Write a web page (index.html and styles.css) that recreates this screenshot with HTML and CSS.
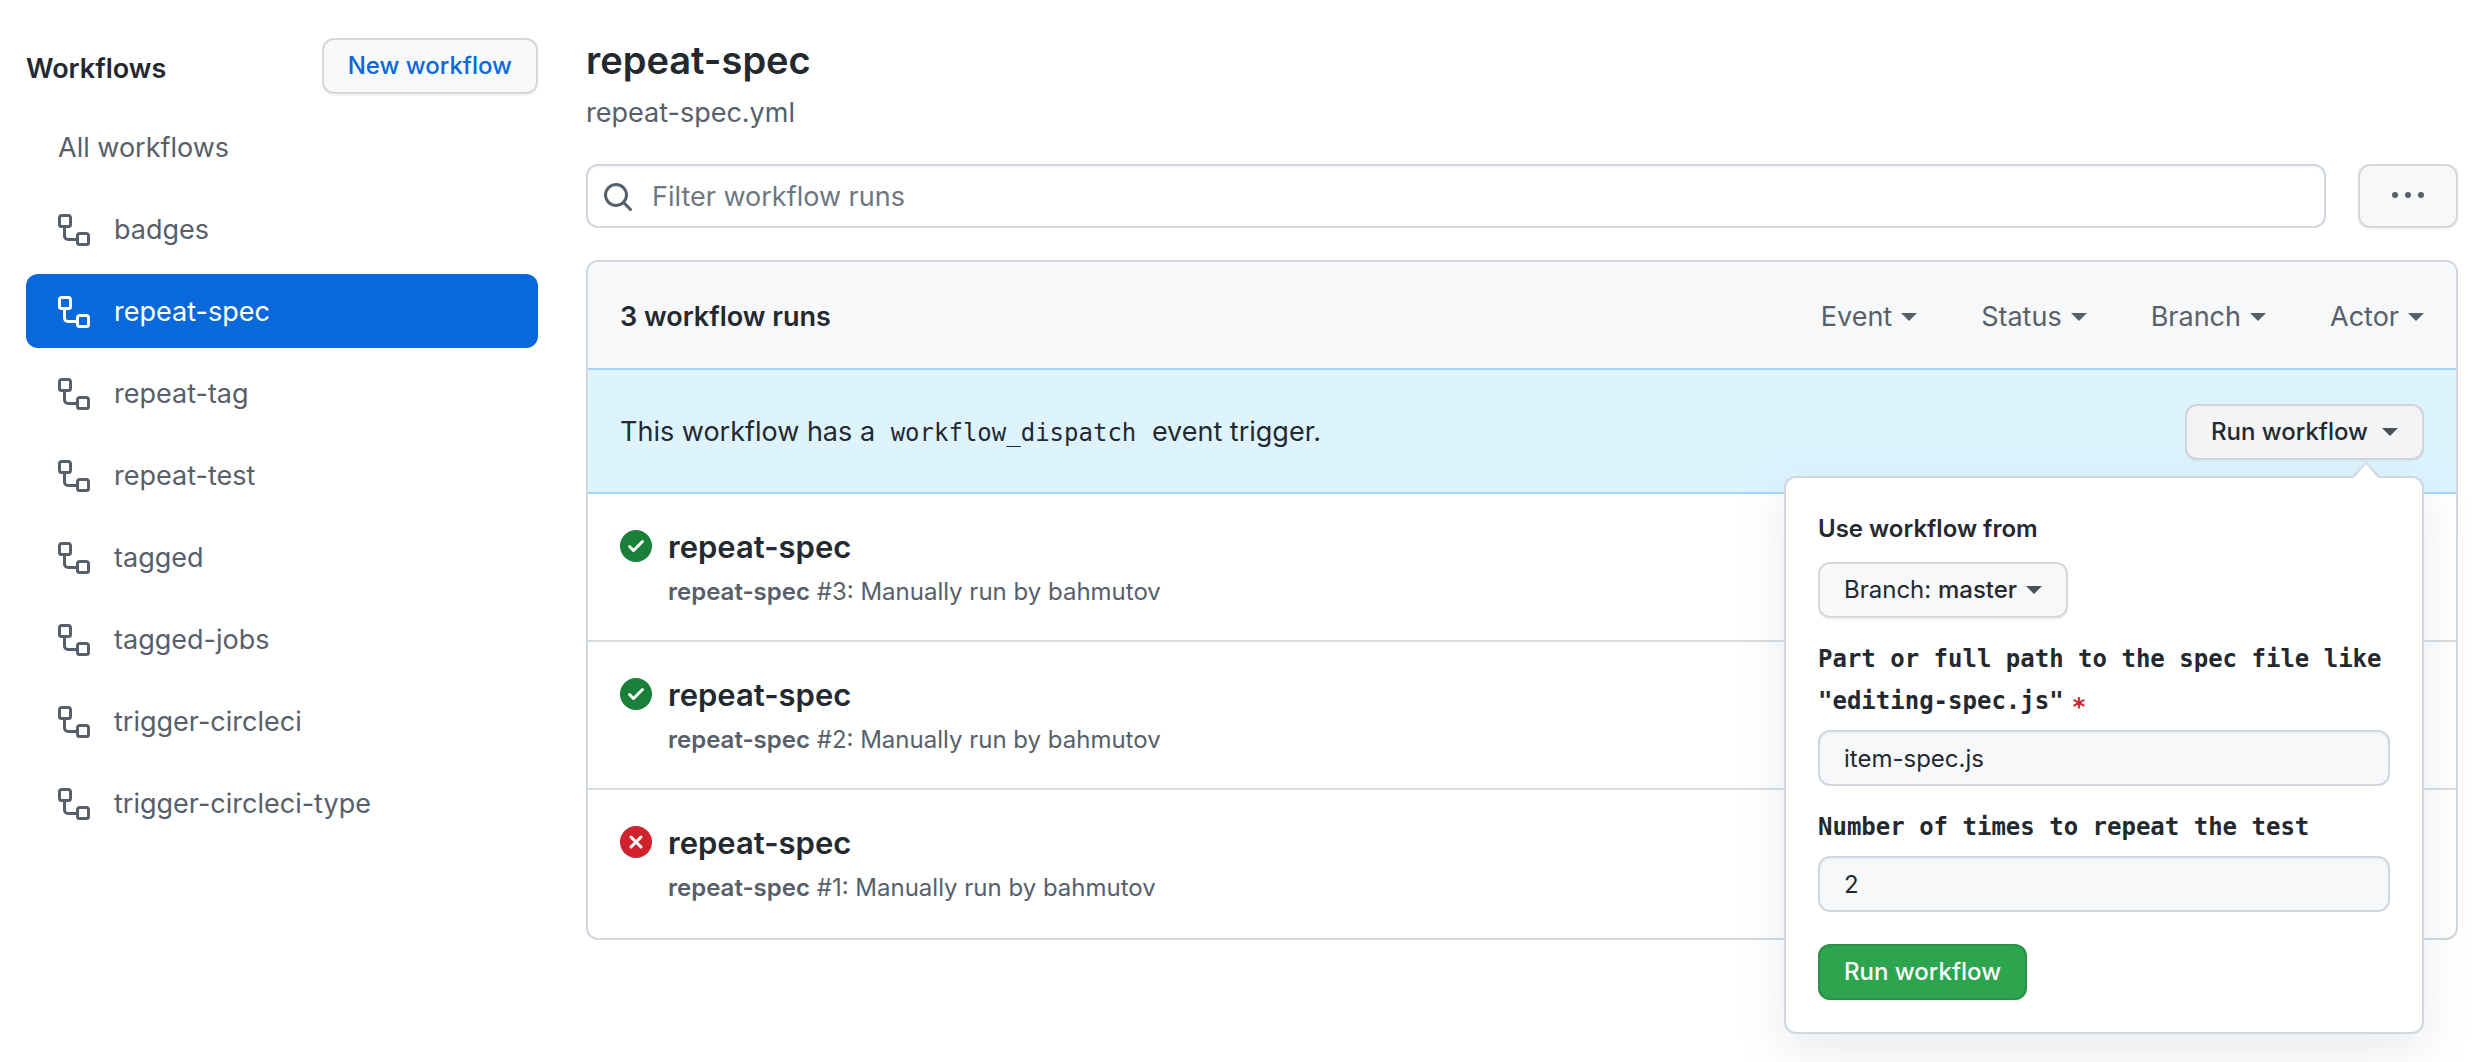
FILE: index.html
```html
<!DOCTYPE html>
<html lang="en">
<head>
<meta charset="utf-8">
<meta name="viewport" content="width=device-width, initial-scale=1">
<title>Workflow runs · repeat-spec</title>
<link rel="stylesheet" href="styles.css">
</head>
<body>
<svg class="sprite" aria-hidden="true">
  <symbol id="i-workflow" viewBox="0 0 16 16"><path fill-rule="evenodd" d="M0 1.75C0 .784.784 0 1.75 0h3.5C6.216 0 7 .784 7 1.75v3.5A1.75 1.75 0 0 1 5.25 7H4v4a1 1 0 0 0 1 1h4v-1.25C9 9.784 9.784 9 10.75 9h3.5c.966 0 1.75.784 1.75 1.75v3.5A1.75 1.75 0 0 1 14.250 16h-3.5A1.75 1.75 0 0 1 9 14.250v-.75H5A2.500 2.500 0 0 1 2.500 11V7h-.75A1.750 1.750 0 0 1 0 5.250Zm1.750-.25a.25.25 0 0 0-.25.25v3.500c0 .138.112.25.25.25h3.500a.25.25 0 0 0 .25-.25v-3.500a.25.25 0 0 0-.25-.25Zm9 9a.25.25 0 0 0-.25.25v3.500c0 .138.112.25.25.25h3.500a.25.25 0 0 0 .25-.25v-3.500a.25.25 0 0 0-.25-.25Z"/></symbol>
  <symbol id="i-search" viewBox="0 0 16 16"><path fill-rule="evenodd" d="M11.500 7a4.500 4.500 0 1 1-9 0 4.500 4.500 0 0 1 9 0Zm-.820 4.740a6 6 0 1 1 1.060-1.060l3.040 3.040a.75.75 0 1 1-1.060 1.060Z"/></symbol>
  <symbol id="i-dots" viewBox="0 0 16 16"><path d="M8 9a1.500 1.500 0 1 0 0-3 1.500 1.500 0 0 0 0 3ZM1.500 9a1.500 1.500 0 1 0 0-3 1.500 1.500 0 0 0 0 3Zm13 0a1.500 1.500 0 1 0 0-3 1.500 1.500 0 0 0 0 3Z"/></symbol>
  <symbol id="i-check" viewBox="0 0 16 16"><path fill-rule="evenodd" d="M8 16A8 8 0 1 0 8 0a8 8 0 0 0 0 16Zm3.780-9.720a.75.75 0 0 0-1.060-1.060L6.750 9.190 5.280 7.720a.75.75 0 0 0-1.060 1.060l2 2a.75.75 0 0 0 1.060 0Z"/></symbol>
  <symbol id="i-x" viewBox="0 0 16 16"><circle cx="8" cy="8" r="8"/><path fill="none" stroke="#fff" stroke-width="1.5" stroke-linecap="round" d="M5.500 5.500l5 5M10.500 5.500l-5 5"/></symbol>
</svg>

<div class="layout">
  <aside class="sidebar">
    <div class="sidebar-head">
      <h2 class="sidebar-title">Workflows</h2>
      <button class="btn btn-link" type="button">New workflow</button>
    </div>
    <nav class="nav" aria-label="Workflows">
      <a class="nav-item" href="#">All workflows</a>
      <a class="nav-item" href="#"><svg class="icon"><use href="#i-workflow"/></svg>badges</a>
      <a class="nav-item nav-item-selected" href="#" aria-current="page"><svg class="icon"><use href="#i-workflow"/></svg>repeat-spec</a>
      <a class="nav-item" href="#"><svg class="icon"><use href="#i-workflow"/></svg>repeat-tag</a>
      <a class="nav-item" href="#"><svg class="icon"><use href="#i-workflow"/></svg>repeat-test</a>
      <a class="nav-item" href="#"><svg class="icon"><use href="#i-workflow"/></svg>tagged</a>
      <a class="nav-item" href="#"><svg class="icon"><use href="#i-workflow"/></svg>tagged-jobs</a>
      <a class="nav-item" href="#"><svg class="icon"><use href="#i-workflow"/></svg>trigger-circleci</a>
      <a class="nav-item" href="#"><svg class="icon"><use href="#i-workflow"/></svg>trigger-circleci-type</a>
    </nav>
  </aside>

  <main class="main">
    <h1 class="page-title">repeat-spec</h1>
    <p class="page-file">repeat-spec.yml</p>

    <div class="toolbar">
      <label class="search">
        <svg class="icon" aria-hidden="true"><use href="#i-search"/></svg>
        <input class="search-input" type="text" placeholder="Filter workflow runs" aria-label="Filter workflow runs">
      </label>
      <button class="btn btn-more" type="button" aria-label="More options"><svg class="icon"><use href="#i-dots"/></svg></button>
    </div>

    <section class="box">
      <header class="box-head">
        <strong class="box-title">3 workflow runs</strong>
        <div class="filters">
          <button class="filter" type="button">Event<span class="caret"></span></button>
          <button class="filter" type="button">Status<span class="caret"></span></button>
          <button class="filter" type="button">Branch<span class="caret"></span></button>
          <button class="filter" type="button">Actor<span class="caret"></span></button>
        </div>
      </header>

      <div class="banner">
        <p class="banner-text">This workflow has a <code class="code">workflow_dispatch</code> event trigger.</p>
        <div class="dispatch">
          <button class="btn btn-open" type="button" aria-expanded="true">Run workflow<span class="caret"></span></button>
          <form class="popover">
            <p class="popover-title">Use workflow from</p>
            <button class="btn btn-branch" type="button"><span>Branch: <b class="branch-name">master</b></span><span class="caret"></span></button>
            <label class="field-label" for="spec">Part or full path to the spec file like "editing-spec.js"<span class="required">*</span></label>
            <input class="field" id="spec" type="text" value="item-spec.js">
            <label class="field-label" for="times">Number of times to repeat the test</label>
            <input class="field" id="times" type="text" value="2">
            <button class="btn btn-primary" type="button">Run workflow</button>
          </form>
        </div>
      </div>

      <article class="run">
        <svg class="icon icon-success" role="img" aria-label="Success"><use href="#i-check"/></svg>
        <div class="run-body">
          <a class="run-title" href="#">repeat-spec</a>
          <p class="run-meta"><b class="run-name">repeat-spec</b> #3: Manually run by bahmutov</p>
        </div>
      </article>
      <article class="run">
        <svg class="icon icon-success" role="img" aria-label="Success"><use href="#i-check"/></svg>
        <div class="run-body">
          <a class="run-title" href="#">repeat-spec</a>
          <p class="run-meta"><b class="run-name">repeat-spec</b> #2: Manually run by bahmutov</p>
        </div>
      </article>
      <article class="run">
        <svg class="icon icon-failure" role="img" aria-label="Failure"><use href="#i-x"/></svg>
        <div class="run-body">
          <a class="run-title" href="#">repeat-spec</a>
          <p class="run-meta"><b class="run-name">repeat-spec</b> #1: Manually run by bahmutov</p>
        </div>
      </article>
    </section>
  </main>
</div>
</body>
</html>
```
FILE: styles.css
```css
* {
  box-sizing: border-box;
}

body,
h1,
h2,
p {
  margin: 0;
}

body {
  background: #fff;
  color: #24292f;
  font-family: Inter, "Liberation Sans", sans-serif;
  font-size: 27px;
  line-height: 42px;
}

button,
input {
  font: inherit;
  color: inherit;
}

a {
  color: inherit;
  text-decoration: none;
}

.sprite {
  display: none;
}

.icon {
  width: 32px;
  height: 32px;
  flex: none;
  fill: currentColor;
}

.caret {
  flex: none;
  border: 8px solid transparent;
  border-top-color: currentColor;
  border-bottom-width: 0;
}

.layout {
  display: grid;
  grid-template-columns: 512px minmax(0, 1fr);
  gap: 48px;
  min-height: 100vh;
  padding: 28px 24px 28px 26px;
}

/* Buttons */

.btn {
  display: inline-flex;
  align-items: center;
  justify-content: center;
  height: 56px;
  padding: 0 24px;
  border: 2px solid rgba(27, 31, 36, 0.15);
  border-radius: 12px;
  background: #f6f8fa;
  box-shadow: 0 2px 0 rgba(27, 31, 36, 0.04);
  font-size: 24px;
  font-weight: 500;
  line-height: 40px;
  white-space: nowrap;
}

.btn-link {
  color: #0969da;
}

.btn-more {
  width: 100px;
  height: 64px;
  color: #57606a;
}

.btn-open {
  gap: 14px;
  background: #f3f4f6;
}

.btn-open .caret,
.btn-branch .caret {
  border-top-color: #4b5056;
}

.btn-branch {
  gap: 9px;
  font-weight: 400;
}

.branch-name {
  font-weight: 500;
}

.btn-primary {
  margin-top: 32px;
  background: #2da44e;
  color: #fff;
}

/* Sidebar */

.sidebar {
  padding-top: 10px;
}

.sidebar-head {
  display: flex;
  align-items: center;
  justify-content: space-between;
  margin-bottom: 16px;
}

.sidebar-title {
  padding-top: 6px;
  font-size: 27px;
  font-weight: 600;
}

.nav {
  display: flex;
  flex-direction: column;
  gap: 8px;
}

.nav-item {
  display: flex;
  align-items: center;
  gap: 24px;
  padding: 17px 32px 15px;
  border-radius: 12px;
  color: #57606a;
}

.nav-item-selected {
  background: #0969da;
  color: #fff;
}

/* Page heading and search */

.page-title {
  font-size: 38px;
  font-weight: 600;
  line-height: 64px;
}

.page-file {
  color: #57606a;
}

.toolbar {
  display: flex;
  gap: 32px;
  margin: 30px 0 32px;
}

.search {
  display: flex;
  flex: 1;
  align-items: center;
  gap: 18px;
  height: 64px;
  padding: 2px 14px 0;
  border: 2px solid #d0d7de;
  border-radius: 12px;
  box-shadow: inset 0 2px 0 rgba(208, 215, 222, 0.2);
  color: #57606a;
}

.search-input {
  flex: 1;
  min-width: 0;
  padding: 0;
  border: 0;
  outline: 0;
  background: transparent;
}

.search-input::placeholder {
  color: #6e7781;
  opacity: 1;
}

/* Runs */

.box {
  border: 2px solid #d0d7de;
  border-radius: 12px;
}

.box-head {
  display: flex;
  align-items: center;
  justify-content: space-between;
  padding: 34px 32px 30px;
  border-radius: 10px 10px 0 0;
  background: #f6f8fa;
}

.box-title {
  font-weight: 600;
}

.filters {
  display: flex;
  gap: 64px;
}

.filter {
  display: flex;
  align-items: center;
  gap: 9px;
  padding: 0;
  border: 0;
  background: none;
  color: #57606a;
}

.banner {
  display: flex;
  align-items: center;
  justify-content: space-between;
  padding: 34px 32px 32px;
  border: solid #a5d6ff;
  border-width: 2px 0;
  background: #ddf4ff;
}

.code {
  padding: 0 8px;
  font-family: "DejaVu Sans Mono", monospace;
  font-size: 24px;
}

.run {
  display: flex;
  gap: 16px;
  padding: 32px 32px 30px;
}

.run + .run {
  border-top: 2px solid #d8dee4;
}

.run:last-child {
  padding-bottom: 32px;
}

.run .icon {
  margin-top: 4px;
}

.icon-success {
  color: #1a7f37;
}

.icon-failure {
  color: #cf222e;
}

.run-body {
  display: flex;
  flex-direction: column;
  gap: 6px;
}

.run-title {
  font-size: 31px;
  font-weight: 600;
}

.run-meta {
  color: #57606a;
  font-size: 24px;
  line-height: 36px;
}

.run-name {
  font-weight: 600;
}

/* Run workflow popover */

.dispatch {
  display: flex;
  position: relative;
}

.popover {
  position: absolute;
  z-index: 1;
  top: 72px;
  right: 0;
  width: 640px;
  padding: 30px 32px 32px;
  border: 2px solid #d0d7de;
  border-radius: 12px;
  background: #fff;
  box-shadow: 0 16px 48px rgba(140, 149, 159, 0.2);
  font-size: 24px;
}

.popover::before,
.popover::after {
  content: "";
  position: absolute;
  bottom: 100%;
  right: 40px;
  border: 16px solid transparent;
  border-top-width: 0;
  border-bottom-color: #d0d7de;
}

.popover::after {
  right: 42px;
  margin-bottom: -2px;
  border-width: 0 14px 16px;
  border-bottom-color: #fff;
}

.popover-title {
  margin-bottom: 12px;
  font-weight: 600;
}

.field-label {
  display: block;
  margin: 20px 0 8px;
  font-family: "DejaVu Sans Mono", monospace;
  font-weight: 700;
}

.required {
  margin-left: 8px;
  color: #cf222e;
  line-height: 1;
  vertical-align: sub;
}

.field {
  display: block;
  width: 100%;
  height: 56px;
  padding: 0 24px;
  border: 2px solid #d0d7de;
  border-radius: 12px;
  outline: 0;
  background: #f6f8fa;
  box-shadow: inset 0 2px 0 rgba(208, 215, 222, 0.2);
}
```
